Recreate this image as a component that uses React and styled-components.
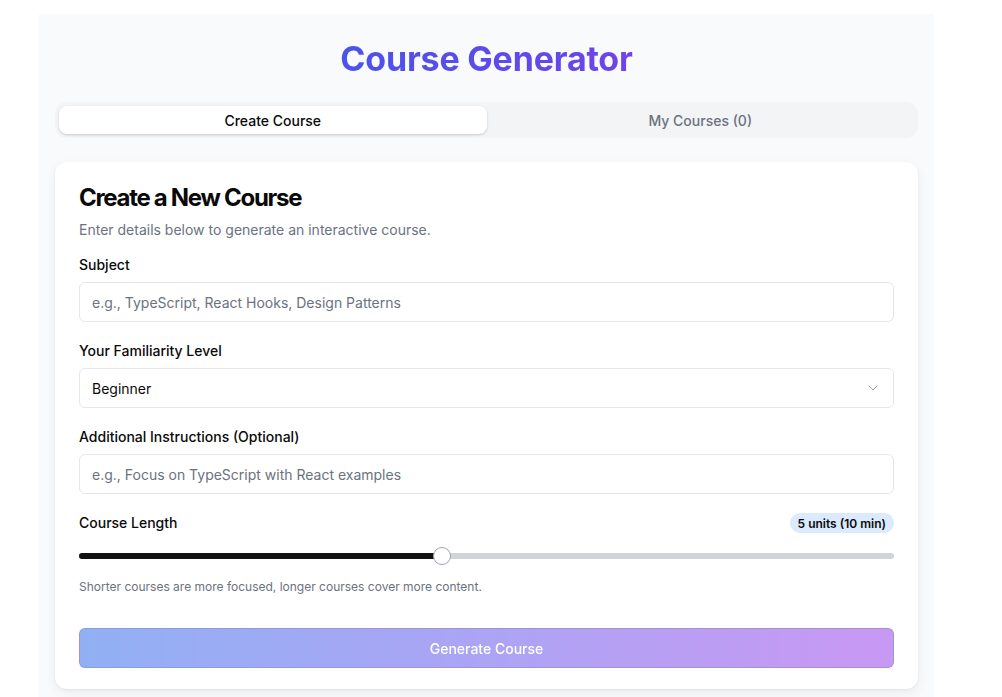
import React, { useState } from "react";
import styled, { createGlobalStyle } from "styled-components";
import { ChevronDown } from "lucide-react";

const GlobalStyle = createGlobalStyle`
  body {
    margin: 0;
    background: #ffffff;
    font-family: Inter, "Noto Sans", sans-serif;
    color: #0a0a0a;
  }
  * { box-sizing: border-box; }
`;

const Page = styled.div`
  width: 895px;
  margin: 14px 0 0 39px;
  padding: 16px 16px 40px;
  background: #f9fafb;
  min-height: 720px;
`;

const Title = styled.h1`
  margin: 9px 0 23px;
  font-size: 34px;
  line-height: 40px;
  font-weight: 700;
  letter-spacing: -0.2px;
  text-align: center;
  background: linear-gradient(to right, #2563eb, #9333ea);
  -webkit-background-clip: text;
  background-clip: text;
  color: transparent;
`;

const TabList = styled.div`
  display: grid;
  grid-template-columns: 1fr 1fr;
  height: 36px;
  padding: 4px;
  background: #f3f4f6;
  border-radius: 12px;
  margin-bottom: 24px;
`;

const Tab = styled.button`
  border: none;
  border-radius: 8px;
  font-family: inherit;
  font-size: 14px;
  font-weight: 500;
  background: ${(p) => (p.$active ? "#ffffff" : "transparent")};
  color: ${(p) => (p.$active ? "#0a0a0a" : "#6b7280")};
  box-shadow: ${(p) =>
    p.$active ? "0 1px 3px rgba(0,0,0,0.12), 0 1px 2px rgba(0,0,0,0.06)" : "none"};
  cursor: pointer;
`;

const Card = styled.div`
  background: #ffffff;
  border-radius: 12px;
  box-shadow: 0 4px 12px rgba(0, 0, 0, 0.06), 0 1px 3px rgba(0, 0, 0, 0.05);
  padding: 24px 24px 21px;
`;

const CardTitle = styled.h2`
  margin: 0;
  font-size: 24px;
  line-height: 24px;
  font-weight: 700;
  letter-spacing: -1.3px;
  color: #0a0a0a;
`;

const CardText = styled.p`
  margin: 10px 0 15px;
  font-size: 14px;
  line-height: 20px;
  color: #6b7280;
`;

const Form = styled.div`
  display: flex;
  flex-direction: column;
  gap: 19px;
`;

const Field = styled.div`
  display: flex;
  flex-direction: column;
  gap: 7px;
`;

const Label = styled.label`
  font-size: 14px;
  line-height: 20px;
  font-weight: 500;
  color: #0a0a0a;
`;

const Input = styled.input`
  height: 40px;
  width: 100%;
  padding: 0 12px;
  border: 1px solid #e5e7eb;
  border-radius: 6px;
  font-family: inherit;
  font-size: 14px;
  color: #0a0a0a;
  background: #ffffff;
  outline: none;
  &::placeholder {
    color: #6b7280;
  }
`;

const Select = styled.div`
  height: 40px;
  display: flex;
  align-items: center;
  justify-content: space-between;
  padding: 0 12px;
  border: 1px solid #e5e7eb;
  border-radius: 6px;
  font-size: 14px;
  color: #0a0a0a;
  svg {
    color: #9ca3af;
  }
`;

const LengthRow = styled.div`
  display: flex;
  align-items: center;
  justify-content: space-between;
  height: 20px;
`;

const Badge = styled.span`
  display: inline-flex;
  align-items: center;
  height: 20px;
  padding: 0 8px;
  border-radius: 999px;
  background: #dbeafe;
  font-size: 12px;
  font-weight: 600;
  color: #0a0a0a;
`;

const SliderWrap = styled.div`
  position: relative;
  height: 18px;
  margin-top: 7px;
  display: flex;
  align-items: center;
`;

const Track = styled.div`
  position: relative;
  width: 100%;
  height: 6px;
  border-radius: 999px;
  background: #d1d5db;
`;

const Fill = styled.div`
  height: 100%;
  border-radius: 999px;
  background: #111111;
`;

const Thumb = styled.div`
  position: absolute;
  top: 50%;
  width: 18px;
  height: 18px;
  border-radius: 50%;
  background: #ffffff;
  border: 1.5px solid #9ca3af;
  transform: translate(-50%, -50%);
`;

const Hint = styled.p`
  margin: 7px 0 0;
  font-size: 12px;
  line-height: 16px;
  color: #6b7280;
`;

const GenerateButton = styled.button`
  margin-top: 14px;
  height: 40px;
  width: 100%;
  border: 1px solid rgba(0, 0, 0, 0.35);
  border-radius: 6px;
  background: linear-gradient(to right, #2563eb, #9333ea);
  color: #ffffff;
  font-family: inherit;
  font-size: 14px;
  font-weight: 500;
  opacity: 0.5;
`;

export default function App() {
  const [tab, setTab] = useState("create");
  const units = 5;
  const pct = 44.5;

  return (
    <>
      <GlobalStyle />
      <Page>
        <Title>Course Generator</Title>
        <TabList>
          <Tab $active={tab === "create"} onClick={() => setTab("create")}>
            Create Course
          </Tab>
          <Tab $active={tab === "mine"} onClick={() => setTab("mine")}>
            My Courses (0)
          </Tab>
        </TabList>
        <Card>
          <CardTitle>Create a New Course</CardTitle>
          <CardText>Enter details below to generate an interactive course.</CardText>
          <Form>
            <Field>
              <Label>Subject</Label>
              <Input placeholder="e.g., TypeScript, React Hooks, Design Patterns" />
            </Field>
            <Field>
              <Label>Your Familiarity Level</Label>
              <Select>
                <span>Beginner</span>
                <ChevronDown size={16} strokeWidth={1.5} />
              </Select>
            </Field>
            <Field>
              <Label>Additional Instructions (Optional)</Label>
              <Input placeholder="e.g., Focus on TypeScript with React examples" />
            </Field>
            <Field>
              <LengthRow>
                <Label>Course Length</Label>
                <Badge>
                  {units} units ({units * 2} min)
                </Badge>
              </LengthRow>
              <SliderWrap>
                <Track>
                  <Fill style={{ width: `${pct}%` }} />
                  <Thumb style={{ left: `${pct}%` }} />
                </Track>
              </SliderWrap>
              <Hint>Shorter courses are more focused, longer courses cover more content.</Hint>
            </Field>
            <GenerateButton disabled>Generate Course</GenerateButton>
          </Form>
        </Card>
      </Page>
    </>
  );
}
